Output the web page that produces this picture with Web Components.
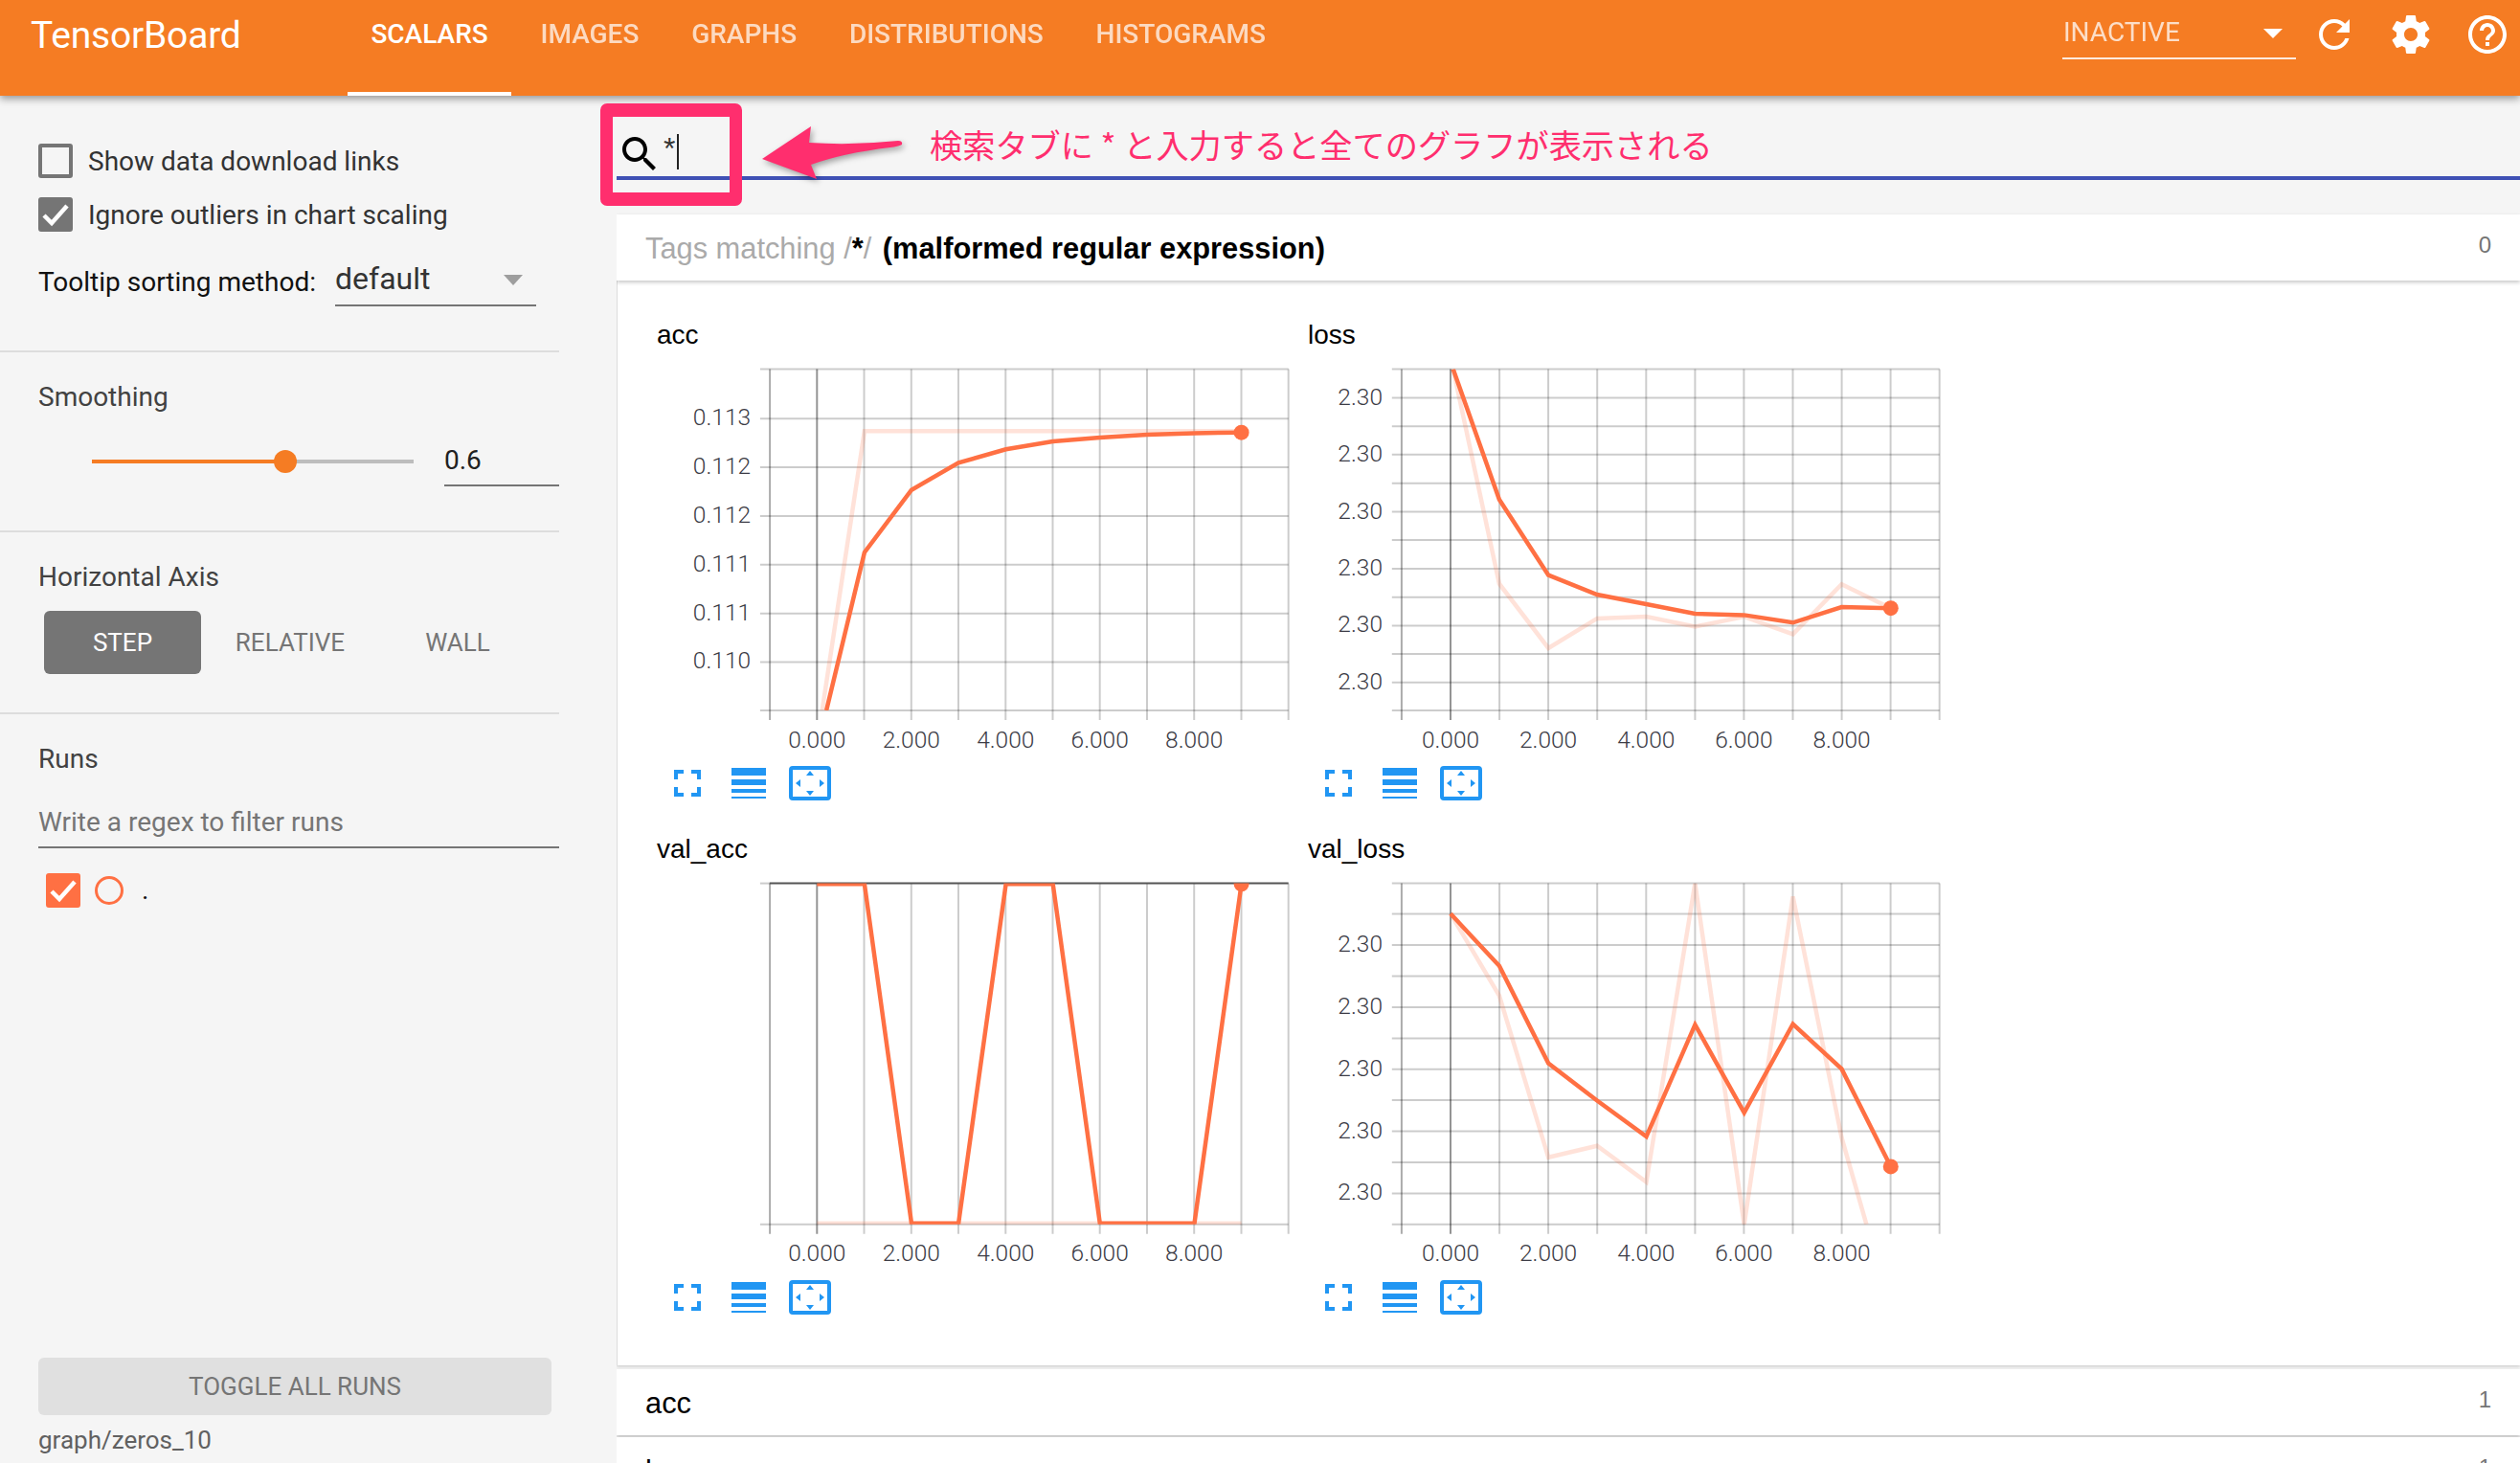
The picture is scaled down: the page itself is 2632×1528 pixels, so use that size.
<!DOCTYPE html>
<html lang="ja">
<head>
<meta charset="utf-8">
<title>TensorBoard</title>
<style>
  html, body { margin: 0; height: 1528px; overflow: hidden; background: #f5f5f5; }
  body { display: flex; flex-direction: column; font-family: Roboto, "Noto Sans CJK JP", sans-serif; }
  .row { display: flex; flex: 1; min-height: 0; }
</style>
</head>
<body>
<tb-header></tb-header>
<div class="row">
  <tb-sidebar></tb-sidebar>
  <tb-main>
    <tb-pane count="0" open>
      <span slot="title"><span style="color:#aaa">Tags matching /</span><b>*</b><span style="color:#aaa">/</span> <b style="margin-left:3px">(malformed regular expression)</b></span>
      <tb-chart key="acc">acc</tb-chart>
      <tb-chart key="loss">loss</tb-chart>
      <tb-chart key="val_acc">val_acc</tb-chart>
      <tb-chart key="val_loss">val_loss</tb-chart>
    </tb-pane>
    <tb-pane count="1"><span slot="title">acc</span></tb-pane>
    <tb-pane count="1"><span slot="title">loss</span></tb-pane>
  </tb-main>
</div>
<tb-annotation>検索タブに * と入力すると全てのグラフが表示される</tb-annotation>

<script>
const ICONS = {
    refresh: 'M17.65 6.35C16.2 4.9 14.21 4 12 4c-4.42 0-7.99 3.58-7.99 8s3.57 8 7.99 8c3.73 0 6.84-2.55 7.73-6h-2.08c-.82 2.33-3.04 4-5.65 4-3.31 0-6-2.69-6-6s2.69-6 6-6c1.66 0 3.14.69 4.22 1.78L13 11h7V4l-2.35 2.35z',
    settings: 'M19.43 12.98c.04-.32.07-.64.07-.98s-.03-.66-.07-.98l2.11-1.65c.19-.15.24-.42.12-.64l-2-3.46c-.12-.22-.39-.3-.61-.22l-2.49 1c-.52-.4-1.08-.73-1.69-.98l-.38-2.65C14.46 2.18 14.25 2 14 2h-4c-.25 0-.46.18-.49.42l-.38 2.65c-.61.25-1.17.59-1.69.98l-2.49-1c-.23-.09-.49 0-.61.22l-2 3.46c-.13.22-.07.49.12.64l2.11 1.65c-.04.32-.07.65-.07.98s.03.66.07.98l-2.11 1.65c-.19.15-.24.42-.12.64l2 3.46c.12.22.39.3.61.22l2.49-1c.52.4 1.08.73 1.69.98l.38 2.65c.03.24.24.42.49.42h4c.25 0 .46-.18.49-.42l.38-2.65c.61-.25 1.17-.59 1.69-.98l2.49 1c.23.09.49 0 .61-.22l2-3.46c.12-.22.07-.49-.12-.64l-2.11-1.65zM12 15.5c-1.93 0-3.5-1.57-3.5-3.5s1.57-3.5 3.5-3.5 3.5 1.57 3.5 3.5-1.57 3.5-3.5 3.5z',
    help: 'M11 18h2v-2h-2v2zm1-16C6.48 2 2 6.48 2 12s4.48 10 10 10 10-4.48 10-10S17.52 2 12 2zm0 18c-4.41 0-8-3.59-8-8s3.59-8 8-8 8 3.59 8 8-3.59 8-8 8zm0-14c-2.21 0-4 1.79-4 4h2c0-1.1.9-2 2-2s2 .9 2 2c0 2-3 1.75-3 5h2c0-2.25 3-2.5 3-5 0-2.21-1.79-4-4-4z',
    search: 'M15.5 14h-.79l-.28-.27C15.41 12.59 16 11.11 16 9.5 16 5.91 13.09 3 9.5 3S3 5.91 3 9.5 5.91 16 9.5 16c1.61 0 3.09-.59 4.23-1.57l.27.28v.79l5 4.99L20.49 19l-4.99-5zm-6 0C7.01 14 5 11.99 5 9.5S7.01 5 9.5 5 14 7.01 14 9.5 11.99 14 9.5 14z'
};

const icon = (name, fill) => `<svg width="48" height="48" viewBox="0 0 24 24" fill="${fill}"><path d="${ICONS[name]}"/></svg>`;

class TbHeader extends HTMLElement {
    constructor() {
        super();
        this.attachShadow({ mode: 'open' });
    }

    connectedCallback() {
        const tabs = ['SCALARS', 'IMAGES', 'GRAPHS', 'DISTRIBUTIONS', 'HISTOGRAMS'];
        this.shadowRoot.innerHTML = `
            <style>
                :host {
                    display: flex;
                    flex: none;
                    height: 100px;
                    background: #f57c23;
                    color: #fff;
                    box-shadow: 0 3px 8px rgba(0, 0, 0, 0.4);
                    position: relative;
                    z-index: 2;
                    font-family: Roboto, sans-serif;
                }
                .logo { width: 360px; padding: 14px 0 0 32px; box-sizing: border-box; font-size: 39px; line-height: 46px; font-weight: 400; letter-spacing: -0.2px; }
                .tabs { display: flex; }
                .tab { padding: 15px 27.4px 0; font-size: 28px; line-height: 42px; font-weight: 500; opacity: 0.72; position: relative; }
                .tab.on { opacity: 1; }
                .tab.on::after { content: ""; position: absolute; left: 3px; right: 3px; bottom: 0; height: 4px; background: #fff; }
                .right { margin-left: auto; display: flex; align-items: flex-start; padding: 12px 10px 0 0; }
                .select { width: 244px; height: 50px; box-sizing: border-box; border-bottom: 2px solid rgba(255,255,255,.85); padding: 1px 1px 0; font-size: 28px; line-height: 42px; display: flex; justify-content: space-between; margin-right: 16px; }
                .select span { opacity: 0.75; }
                .select i { width: 0; height: 0; border: 10px solid transparent; border-top-color: #fff; border-bottom: 0; margin: 17px 13px 0 0; }
                svg { display: block; }
                .gear { margin: 0 32px 0 32px; }
            </style>
            <div class="logo">TensorBoard</div>
            <div class="tabs">
                ${tabs.map((t, i) => `<div class="tab ${i === 0 ? 'on' : ''}">${t}</div>`).join('')}
            </div>
            <div class="right">
                <div class="select"><span>INACTIVE</span><i></i></div>
                ${icon('refresh', '#fff')}
                <div class="gear">${icon('settings', '#fff')}</div>
                ${icon('help', '#fff')}
            </div>
        `;
    }
}

class TbCheck extends HTMLElement {
    constructor() {
        super();
        this.attachShadow({ mode: 'open' });
    }

    connectedCallback() {
        const checked = this.hasAttribute('checked');
        const color = this.getAttribute('color') || '#757575';
        this.shadowRoot.innerHTML = `
            <style>
                :host { display: flex; align-items: center; height: 36px; font-size: 28px; color: #333; }
                .box { width: 36px; height: 36px; box-sizing: border-box; border: 4px solid ${color}; border-radius: 3px; background: ${checked ? color : 'transparent'}; margin-right: 16px; flex: none; }
                svg { display: block; margin: -4px; }
            </style>
            <div class="box">${checked ? `<svg width="36" height="36" viewBox="0 0 36 36"><path d="M6 19l8 8L30 9" fill="none" stroke="#fff" stroke-width="4.5"/></svg>` : ''}</div>
            <slot></slot>
        `;
    }
}

class TbSidebar extends HTMLElement {
    constructor() {
        super();
        this.attachShadow({ mode: 'open' });
    }

    connectedCallback() {
        this.shadowRoot.innerHTML = `
            <style>
                :host { display: flex; flex-direction: column; flex: none; width: 644px; box-sizing: border-box; padding-right: 60px; font-family: Roboto, sans-serif; color: #424242; }
                section { box-sizing: border-box; border-bottom: 2px solid #ddd; padding-left: 40px; }
                .s1 { height: 268px; padding-top: 50px; }
                .s1 tb-check + tb-check { margin-top: 20px; }
                .sort { display: flex; margin-top: 28px; }
                .sort label { font-size: 28px; line-height: 32px; margin-top: 9px; width: 310px; color: #111; white-space: nowrap; }
                .select { width: 210px; height: 50px; box-sizing: border-box; border-bottom: 2px solid #757575; display: flex; justify-content: space-between; font-size: 32px; line-height: 42px; color: #333; }
                .select i { width: 0; height: 0; border: 10px solid transparent; border-top: 11px solid #9e9e9e; border-bottom: 0; margin: 17px 14px 0 0; }
                h3 { margin: 0; font-size: 28px; line-height: 32px; font-weight: 400; color: #424242; }
                .s2 { height: 188px; padding-top: 31px; }
                .smooth { display: flex; margin-top: 29px; padding-left: 56px; gap: 32px; }
                .slider { width: 336px; height: 44px; display: flex; align-items: center; position: relative; }
                .fill { width: 202px; height: 4px; background: #f57c23; }
                .rest { flex: 1; height: 4px; background: #bdbdbd; }
                .knob { position: absolute; left: 190px; top: 10px; width: 24px; height: 24px; border-radius: 50%; background: #f57c23; }
                .num { width: 120px; height: 48px; box-sizing: border-box; border-bottom: 2px solid #757575; font-size: 28px; line-height: 42px; color: #212121; }
                .s3 { height: 190px; padding-top: 31px; }
                .axis { display: flex; margin: 19px 0 0 6px; }
                .axis div { height: 66px; line-height: 66px; text-align: center; font-size: 26px; color: #757575; }
                .axis .step { width: 164px; background: #757575; color: #fff; border-radius: 6px; }
                .axis .rel { width: 186px; }
                .axis .wall { width: 164px; }
                .s4 { flex: 1; display: flex; flex-direction: column; border-bottom: 0; padding-top: 31px; padding-right: 0; }
                .filter { margin-top: 21px; height: 56px; box-sizing: border-box; border-bottom: 2px solid #757575; line-height: 58px; font-size: 28px; color: #757575; }
                .run { display: flex; align-items: center; margin: 26px 0 0 8px; }
                .dot { width: 30px; height: 30px; box-sizing: border-box; border: 3px solid #ff7043; border-radius: 50%; margin-left: -1px; }
                .name { margin-left: 19px; font-size: 28px; color: #111; line-height: 36px; }
                button { margin-top: auto; width: 536px; height: 60px; flex: none; border: 0; border-radius: 6px; background: #e0e0e0; color: #757575; font: 400 26px Roboto, sans-serif; padding: 0; }
                .graph { margin: 10px 0 8px; font-size: 26px; line-height: 32px; color: #616161; }
            </style>
            <section class="s1">
                <tb-check>Show data download links</tb-check>
                <tb-check checked>Ignore outliers in chart scaling</tb-check>
                <div class="sort">
                    <label>Tooltip sorting method:</label>
                    <div class="select">default<i></i></div>
                </div>
            </section>
            <section class="s2">
                <h3>Smoothing</h3>
                <div class="smooth">
                    <div class="slider"><div class="fill"></div><div class="rest"></div><div class="knob"></div></div>
                    <div class="num">0.6</div>
                </div>
            </section>
            <section class="s3">
                <h3>Horizontal Axis</h3>
                <div class="axis">
                    <div class="step">STEP</div>
                    <div class="rel">RELATIVE</div>
                    <div class="wall">WALL</div>
                </div>
            </section>
            <section class="s4">
                <h3>Runs</h3>
                <div class="filter">Write a regex to filter runs</div>
                <div class="run">
                    <tb-check checked color="#ff7043"></tb-check>
                    <div class="dot"></div>
                    <div class="name">.</div>
                </div>
                <button>TOGGLE ALL RUNS</button>
                <div class="graph">graph/zeros_10</div>
            </section>
        `;
    }
}

class TbMain extends HTMLElement {
    constructor() {
        super();
        this.attachShadow({ mode: 'open' });
    }

    connectedCallback() {
        this.shadowRoot.innerHTML = `
            <style>
                :host { display: block; flex: 1; min-width: 0; overflow: hidden; }
                .search { height: 124px; box-sizing: border-box; padding-top: 37px; }
                .bar { height: 51px; box-sizing: border-box; border-bottom: 4px solid #3f51b5; display: flex; align-items: flex-start; }
                svg { display: block; flex: none; }
                .q { margin: 0 0 0 1px; font: 32px/36px "Liberation Sans", sans-serif; color: #333; }
                .caret { width: 1.5px; height: 37px; background: #222; margin: 3px 0 0 2px; }
            </style>
            <div class="search">
                <div class="bar">
                    ${icon('search', '#000')}
                    <span class="q">*</span><span class="caret"></span>
                </div>
            </div>
            <slot></slot>
        `;
    }
}

class TbPane extends HTMLElement {
    constructor() {
        super();
        this.attachShadow({ mode: 'open' });
    }

    connectedCallback() {
        const open = this.hasAttribute('open');
        this.shadowRoot.innerHTML = `
            <style>
                :host { display: block; background: #fff; margin-bottom: ${open ? 4 : 2}px; font-family: "Liberation Sans", sans-serif; }
                .head { height: 69px; box-sizing: border-box; display: flex; justify-content: space-between; align-items: center; padding: 2px 30px 0 30px; font-size: 30.8px; color: #000; background: #fff; box-shadow: 0 2px 4px rgba(0, 0, 0, 0.22); position: relative; }
                .count { font-size: 24px; color: #757575; margin-top: -8px; }
                .body { display: ${open ? 'grid' : 'none'}; grid-template-columns: 680px 680px; grid-auto-rows: 536.5px; height: 1133px; box-sizing: border-box; padding-top: 27px; border-left: 1px solid #ddd; box-shadow: 0 1px 3px rgba(0, 0, 0, 0.2); }
            </style>
            <div class="head"><slot name="title"></slot><span class="count">${this.getAttribute('count')}</span></div>
            <div class="body"><slot></slot></div>
        `;
    }
}

// point lists were read off the reference, see toPx for the conversion
const LEFT = { x0: 433, step: 110.3, lo: 322, stub: 300, labelRight: 278 };
const RIGHT = { x0: 392, step: 114.4, lo: 278, stub: 255, labelRight: 233 };
const CHARTS = {
    acc: {
        col: LEFT, dy: -64, top: 190, bottom: 1224,
        h: [340, 487, 635, 782, 930, 1077],
        labels: [[340, '0.113'], [487, '0.112'], [635, '0.112'], [782, '0.111'], [930, '0.111'], [1077, '0.110']],
        line: [[455, 1224], [544, 745], [654, 556], [764, 474], [875, 433], [985, 409], [1095, 397], [1205, 389], [1316, 384], [1426, 382]],
        faint: [[445, 1224], [544, 378], [1426, 378]]
    },
    loss: {
        col: RIGHT, dy: -64, top: 190, bottom: 1224,
        h: [277, 363, 449, 536, 622, 708, 795, 881, 967, 1053, 1139],
        labels: [[277, '2.30'], [449, '2.30'], [622, '2.30'], [795, '2.30'], [967, '2.30'], [1139, '2.30']],
        line: [[398, 190], [506, 585], [621, 814], [735, 873], [850, 902], [964, 931], [1079, 935], [1193, 958], [1307, 911], [1422, 914]],
        faint: [[398, 190], [506, 840], [621, 1035], [735, 945], [850, 940], [964, 970], [1079, 940], [1193, 993], [1307, 842], [1422, 914]]
    },
    val_acc: {
        col: LEFT, dy: -60.5, top: 180, bottom: 1213, darkTop: true,
        h: [], labels: [],
        line: [[433, 182], [544, 182], [654, 1210], [764, 1210], [875, 182], [985, 182], [1095, 1210], [1316, 1210], [1426, 182]],
        faint: [[433, 1210], [1426, 1210]]
    },
    val_loss: {
        col: RIGHT, dy: -60.5, top: 180, bottom: 1213,
        h: [273, 367, 461, 555, 650, 743, 837, 931, 1025, 1119],
        labels: [[367, '2.30'], [555, '2.30'], [743, '2.30'], [931, '2.30'], [1119, '2.30']],
        line: [[392, 272], [506, 430], [621, 725], [735, 838], [850, 947], [964, 608], [1079, 875], [1193, 606], [1307, 742], [1422, 1038]],
        faint: [[392, 272], [506, 520], [621, 1010], [735, 975], [850, 1085], [964, 180], [1079, 1213], [1193, 220], [1307, 950], [1365, 1213]]
    }
};

class TbChart extends HTMLElement {
    constructor() {
        super();
        this.attachShadow({ mode: 'open' });
    }

    connectedCallback() {
        const c = CHARTS[this.getAttribute('key')];
        const X = v => +(15 + v / 2.24).toFixed(1);
        const Y = v => +(v / 2.9 + c.dy).toFixed(1);
        const toPx = pts => pts.map(p => `${X(p[0])},${Y(p[1])}`).join(' ');
        const right = 1536;

        let grid = '';
        for (let i = -1; i <= 10; i++) {
            const x = X(c.col.x0 + c.col.step * i);
            const cls = i === 0 ? 'axis' : i === -1 ? 'edge' : 'g';
            grid += `<line class="${cls}" x1="${x}" x2="${x}" y1="${Y(c.top)}" y2="${Y(c.bottom) + 10}"/>`;
        }
        [...c.h, c.bottom].forEach(v => {
            grid += `<line class="g" x1="${X(c.col.stub)}" x2="${X(right)}" y1="${Y(v)}" y2="${Y(v)}"/>`;
        });
        grid += c.darkTop
            ? `<line class="g" x1="${X(c.col.stub)}" x2="${X(c.col.lo)}" y1="${Y(c.top)}" y2="${Y(c.top)}"/><line class="dark" x1="${X(c.col.lo)}" x2="${X(right)}" y1="${Y(c.top)}" y2="${Y(c.top)}"/>`
            : `<line class="g" x1="${X(c.col.stub)}" x2="${X(right)}" y1="${Y(c.top)}" y2="${Y(c.top)}"/>`;

        const ylabels = c.labels.map(l =>
            `<text x="${X(c.col.labelRight)}" y="${Y(l[0]) + 7}" text-anchor="end">${l[1]}</text>`).join('');
        const xlabels = [0, 2, 4, 6, 8].map(i =>
            `<text x="${X(c.col.x0 + c.col.step * i)}" y="${Y(c.bottom) + 38.5}" text-anchor="middle">${i}.000</text>`).join('');
        const last = c.line[c.line.length - 1];

        this.shadowRoot.innerHTML = `
            <style>
                :host { display: block; font-family: "Liberation Sans", sans-serif; }
                .title { height: 64px; padding-left: 41px; font-size: 28px; line-height: 60px; color: #000; }
                svg { display: block; }
                .plot { width: 680px; height: 416px; overflow: visible; }
                line { stroke-width: 2; }
                .g { stroke: rgba(0, 0, 0, 0.2); }
                .axis { stroke: rgba(0, 0, 0, 0.42); }
                .edge { stroke: rgba(0, 0, 0, 0.33); }
                .dark { stroke: #555; }
                text { font: 300 24.5px Roboto, sans-serif; fill: #3c3c46; }
                polyline { fill: none; stroke: #ff7043; stroke-width: 4.5; }
                .faint { opacity: 0.2; }
                .tools { display: flex; align-items: center; height: 36px; padding-left: 59px; }
                .full { margin-right: 32px; }
                .rows { margin-right: 24px; }
            </style>
            <div class="title"><slot></slot></div>
            <svg class="plot" viewBox="0 0 680 416">
                <defs><clipPath id="clip"><rect x="${X(c.col.lo)}" y="${Y(c.top)}" width="${X(right) - X(c.col.lo)}" height="${Y(c.bottom) - Y(c.top)}"/></clipPath></defs>
                ${grid}
                ${ylabels}${xlabels}
                <g clip-path="url(#clip)">
                    <polyline class="faint" points="${toPx(c.faint)}"/>
                    <polyline points="${toPx(c.line)}"/>
                    <circle cx="${X(last[0])}" cy="${Y(last[1])}" r="8" fill="#ff7043"/>
                </g>
            </svg>
            <div class="tools">
                <svg class="full" width="28" height="28" viewBox="0 0 28 28" fill="none" stroke="#2196f3" stroke-width="4"><path d="M2 10V2h8M18 2h8v8M26 18v8h-8M10 26H2v-8"/></svg>
                <svg class="rows" width="36" height="32" viewBox="0 0 36 32" fill="#2196f3"><rect width="36" height="8"/><rect y="12" width="36" height="6"/><rect y="22" width="36" height="4"/><rect y="30" width="36" height="2"/></svg>
                <svg width="44" height="36" viewBox="0 0 44 36" fill="#2196f3"><rect x="2" y="2" width="40" height="32" rx="2" fill="none" stroke="#2196f3" stroke-width="4"/><path d="M22 5l4 5h-8zM22 31l4-5h-8zM7 18l5-4v8zM37 18l-5-4v8z"/></svg>
            </div>
        `;
    }
}

class TbAnnotation extends HTMLElement {
    constructor() {
        super();
        this.attachShadow({ mode: 'open' });
    }

    connectedCallback() {
        this.shadowRoot.innerHTML = `
            <style>
                :host { position: absolute; left: 0; top: 0; z-index: 3; }
                .frame { position: absolute; left: 627px; top: 108px; width: 148px; height: 107px; box-sizing: border-box; border: 14px solid #ff2e6e; border-width: 14px 13px; border-radius: 7px; }
                svg { position: absolute; left: 780px; top: 120px; filter: drop-shadow(2px 3px 3px rgba(0, 0, 0, 0.35)); }
                .note { position: absolute; left: 971px; top: 126px; white-space: nowrap; font: 34.2px/48px "Noto Sans CJK JP", sans-serif; color: #ff2e6e; }
            </style>
            <div class="frame"></div>
            <svg width="180" height="80" viewBox="780 120 180 80"><path d="M796 166L847 132L845 149Q890 152 938 147Q943 147 942 151Q938 153 930 154Q880 160 847 172L853 187Z" fill="#ff2e6e"/></svg>
            <div class="note"><slot></slot></div>
        `;
    }
}

customElements.define('tb-header', TbHeader);
customElements.define('tb-check', TbCheck);
customElements.define('tb-sidebar', TbSidebar);
customElements.define('tb-main', TbMain);
customElements.define('tb-pane', TbPane);
customElements.define('tb-chart', TbChart);
customElements.define('tb-annotation', TbAnnotation);
</script>
</body>
</html>
